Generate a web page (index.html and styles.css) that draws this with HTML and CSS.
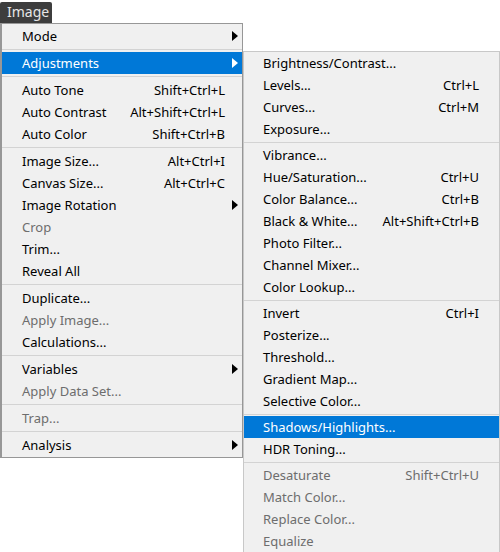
FILE: index.html
```html
<!DOCTYPE html>
<html>
<head>
<meta charset="utf-8">
<link rel="stylesheet" href="styles.css">
</head>
<body>
<div class="title">Image</div>
<div class="menus">
  <ul class="menu main">
    <li class="item"><span class="label">Mode</span><span class="key"></span><span class="sub-ind"><svg width="6" height="10" viewBox="0 0 6 10"><path d="M0 0 L6 5 L0 10 Z"/></svg></span></li>
    <li class="sep"></li>
    <li class="item active"><span class="label">Adjustments</span><span class="key"></span><span class="sub-ind"><svg width="6" height="10" viewBox="0 0 6 10"><path d="M0 0 L6 5 L0 10 Z"/></svg></span></li>
    <li class="sep"></li>
    <li class="item"><span class="label">Auto Tone</span><span class="key">Shift+Ctrl+L</span><span class="sub-ind"></span></li>
    <li class="item"><span class="label">Auto Contrast</span><span class="key">Alt+Shift+Ctrl+L</span><span class="sub-ind"></span></li>
    <li class="item"><span class="label">Auto Color</span><span class="key">Shift+Ctrl+B</span><span class="sub-ind"></span></li>
    <li class="sep"></li>
    <li class="item"><span class="label">Image Size...</span><span class="key">Alt+Ctrl+I</span><span class="sub-ind"></span></li>
    <li class="item"><span class="label">Canvas Size...</span><span class="key">Alt+Ctrl+C</span><span class="sub-ind"></span></li>
    <li class="item"><span class="label">Image Rotation</span><span class="key"></span><span class="sub-ind"><svg width="6" height="10" viewBox="0 0 6 10"><path d="M0 0 L6 5 L0 10 Z"/></svg></span></li>
    <li class="item disabled"><span class="label">Crop</span><span class="key"></span><span class="sub-ind"></span></li>
    <li class="item"><span class="label">Trim...</span><span class="key"></span><span class="sub-ind"></span></li>
    <li class="item"><span class="label">Reveal All</span><span class="key"></span><span class="sub-ind"></span></li>
    <li class="sep"></li>
    <li class="item"><span class="label">Duplicate...</span><span class="key"></span><span class="sub-ind"></span></li>
    <li class="item disabled"><span class="label">Apply Image...</span><span class="key"></span><span class="sub-ind"></span></li>
    <li class="item"><span class="label">Calculations...</span><span class="key"></span><span class="sub-ind"></span></li>
    <li class="sep"></li>
    <li class="item"><span class="label">Variables</span><span class="key"></span><span class="sub-ind"><svg width="6" height="10" viewBox="0 0 6 10"><path d="M0 0 L6 5 L0 10 Z"/></svg></span></li>
    <li class="item disabled"><span class="label">Apply Data Set...</span><span class="key"></span><span class="sub-ind"></span></li>
    <li class="sep"></li>
    <li class="item disabled"><span class="label">Trap...</span><span class="key"></span><span class="sub-ind"></span></li>
    <li class="sep"></li>
    <li class="item"><span class="label">Analysis</span><span class="key"></span><span class="sub-ind"><svg width="6" height="10" viewBox="0 0 6 10"><path d="M0 0 L6 5 L0 10 Z"/></svg></span></li>
  </ul>
  <ul class="menu sub">
    <li class="item"><span class="label">Brightness/Contrast...</span><span class="key"></span><span class="sub-ind"></span></li>
    <li class="item"><span class="label">Levels...</span><span class="key">Ctrl+L</span><span class="sub-ind"></span></li>
    <li class="item"><span class="label">Curves...</span><span class="key">Ctrl+M</span><span class="sub-ind"></span></li>
    <li class="item"><span class="label">Exposure...</span><span class="key"></span><span class="sub-ind"></span></li>
    <li class="sep"></li>
    <li class="item"><span class="label">Vibrance...</span><span class="key"></span><span class="sub-ind"></span></li>
    <li class="item"><span class="label">Hue/Saturation...</span><span class="key">Ctrl+U</span><span class="sub-ind"></span></li>
    <li class="item"><span class="label">Color Balance...</span><span class="key">Ctrl+B</span><span class="sub-ind"></span></li>
    <li class="item"><span class="label">Black &amp; White...</span><span class="key">Alt+Shift+Ctrl+B</span><span class="sub-ind"></span></li>
    <li class="item"><span class="label">Photo Filter...</span><span class="key"></span><span class="sub-ind"></span></li>
    <li class="item"><span class="label">Channel Mixer...</span><span class="key"></span><span class="sub-ind"></span></li>
    <li class="item"><span class="label">Color Lookup...</span><span class="key"></span><span class="sub-ind"></span></li>
    <li class="sep"></li>
    <li class="item"><span class="label">Invert</span><span class="key">Ctrl+I</span><span class="sub-ind"></span></li>
    <li class="item"><span class="label">Posterize...</span><span class="key"></span><span class="sub-ind"></span></li>
    <li class="item"><span class="label">Threshold...</span><span class="key"></span><span class="sub-ind"></span></li>
    <li class="item"><span class="label">Gradient Map...</span><span class="key"></span><span class="sub-ind"></span></li>
    <li class="item"><span class="label">Selective Color...</span><span class="key"></span><span class="sub-ind"></span></li>
    <li class="sep"></li>
    <li class="item active"><span class="label">Shadows/Highlights...</span><span class="key"></span><span class="sub-ind"></span></li>
    <li class="item"><span class="label">HDR Toning...</span><span class="key"></span><span class="sub-ind"></span></li>
    <li class="sep"></li>
    <li class="item disabled"><span class="label">Desaturate</span><span class="key">Shift+Ctrl+U</span><span class="sub-ind"></span></li>
    <li class="item disabled"><span class="label">Match Color...</span><span class="key"></span><span class="sub-ind"></span></li>
    <li class="item disabled"><span class="label">Replace Color...</span><span class="key"></span><span class="sub-ind"></span></li>
    <li class="item disabled"><span class="label">Equalize</span><span class="key"></span><span class="sub-ind"></span></li>
  </ul>
</div>
</body>
</html>
```
FILE: styles.css
```css
html, body {
  margin: 0;
  padding: 0;
  background: #ffffff;
  overflow: hidden;
}
body {
  width: 500px;
  height: 552px;
  font-family: "Noto Sans", "Open Sans", sans-serif;
  font-size: 13px;
  color: #000000;
}
.title {
  margin-top: 2px;
  width: 52px;
  height: 21px;
  box-sizing: border-box;
  background: #3d3d3d;
  color: #e6e6e6;
  border-radius: 2px 2px 0 0;
  padding-left: 7px;
  line-height: 20px;
  font-size: 14px;
}
.menus {
  display: flex;
  align-items: flex-start;
}
.menu {
  list-style: none;
  margin: 0;
  background: #f0f0f0;
  box-sizing: border-box;
}
.main {
  width: 243px;
  padding: 1px 0;
  border: 1px solid #979797;
  border-left-width: 2px;
}
.sub {
  width: 257px;
  margin-top: 28px;
  padding: 0 0 1px;
  border: 1px solid #c8c8c8;
}
.item {
  display: flex;
  align-items: center;
  height: 22px;
  white-space: nowrap;
}
.main .item {
  padding-left: 20px;
}
.sub .item {
  padding-left: 19px;
}
.label {
  flex: 1;
}
.key {
  text-align: right;
}
.sub-ind {
  width: 17px;
  flex: none;
  display: flex;
  align-items: center;
  padding-left: 7px;
  box-sizing: border-box;
}
.sub .sub-ind {
  width: 20px;
}
.sub-ind svg {
  fill: #000000;
  display: block;
}
.active {
  background: #0078d7;
  color: #ffffff;
}
.active .sub-ind svg {
  fill: #ffffff;
}
.disabled {
  color: #6d6d6d;
}
.sep {
  height: 5px;
  display: flex;
  align-items: center;
}
.sub .sep {
  height: 4px;
}
.sep::before {
  content: "";
  display: block;
  width: 100%;
  height: 1px;
  background: #d3d3d3;
}
```
